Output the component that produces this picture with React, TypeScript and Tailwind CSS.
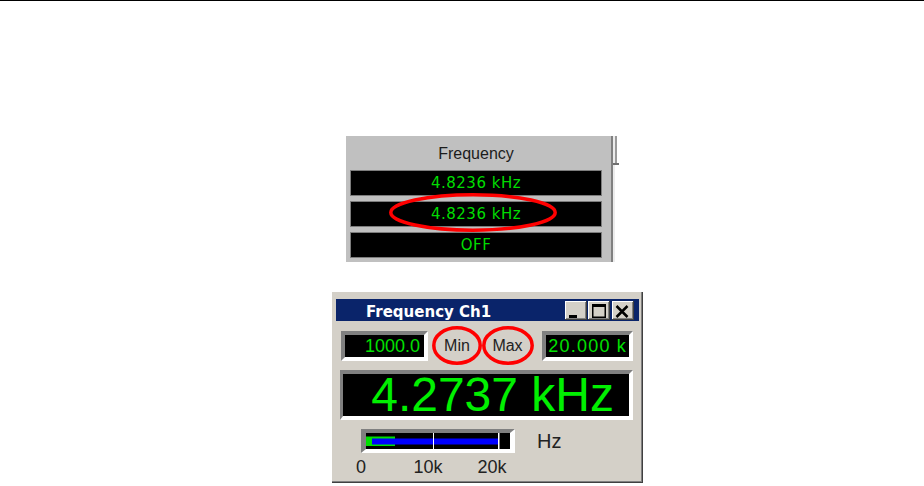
import React from "react";

function Row({ children }: { children: React.ReactNode }) {
  return (
    <div className="h-[26px] bg-black border border-[#7c7c7c] flex items-center justify-center text-[#00dc00] text-[15px] tracking-[0.5px] font-[family-name:'DejaVu_Sans',sans-serif]">
      {children}
    </div>
  );
}

function Btn({ children, className = "" }: { children: React.ReactNode; className?: string }) {
  return (
    <div
      className={
        "w-[22px] h-[19px] bg-[#d4d0c8] shadow-[inset_-1px_-1px_0_#404040,inset_1px_1px_0_#ffffff,inset_-2px_-2px_0_#808080] " +
        className
      }
    >
      {children}
    </div>
  );
}

export default function App() {
  return (
    <div className="w-[924px] h-[486px] bg-white overflow-hidden flex flex-col font-[family-name:'Liberation_Sans',Arial,sans-serif]">
      <div className="h-px w-full bg-black shrink-0" />

      {/* Top panel */}
      <div className="ml-[346px] mt-[135px] flex h-[126px] shrink-0">
        <div className="w-[265px] h-full bg-[#c0c0c0] pl-[4px] pr-[9px] flex flex-col">
          <div className="h-[34px] flex items-center justify-center text-[16px] text-[#1c1c1c] pt-[1px]">
            Frequency
          </div>
          <div className="flex flex-col gap-[5px]">
            <Row>4.8236 kHz</Row>
            <div className="relative">
              <Row>4.8236 kHz</Row>
              <svg
                className="absolute left-[39px] top-[-8px] pointer-events-none"
                width="168"
                height="39"
                viewBox="0 0 168 39"
              >
                <ellipse cx="84" cy="19.5" rx="82.2" ry="17.7" fill="none" stroke="#ff0000" strokeWidth="3.5" />
              </svg>
            </div>
            <Row>OFF</Row>
          </div>
        </div>
        <div className="w-[2px] h-full bg-[#808080]" />
        <div className="relative w-[2px] h-full bg-[#ececec]">
          <div className="absolute left-[2px] top-0 w-[2px] h-[28px] bg-[#9a9a9a]" />
          <div className="absolute left-0 top-[27px] w-[6px] h-[2px] bg-[#707070]" />
        </div>
      </div>

      {/* Window */}
      <div className="ml-[331px] mt-[29px] w-[312px] h-[192px] shrink-0 bg-[#d4d0c8] shadow-[inset_1px_1px_0_#ffffff,inset_-1px_-1px_0_#404040,inset_-2px_-2px_0_#808080] flex flex-col">
        {/* Title bar */}
        <div className="ml-[5px] mt-[8px] w-[303px] h-[22px] bg-[#0a246a] flex items-center">
          <span className="ml-[30px] pt-[4px] text-white text-[15px] font-bold leading-none font-[family-name:'DejaVu_Sans',sans-serif]">
            Frequency Ch1
          </span>
          <div className="ml-auto mr-[5px] flex items-center">
            <Btn>
              <svg width="22" height="19" viewBox="0 0 22 19">
                <rect x="4" y="14" width="8" height="3" fill="#000" />
              </svg>
            </Btn>
            <Btn className="ml-[1px]">
              <svg width="22" height="19" viewBox="0 0 22 19">
                <rect x="4.75" y="3.75" width="12.5" height="12.5" fill="none" stroke="#000" strokeWidth="1.5" />
                <rect x="4" y="3" width="14" height="3" fill="#000" />
              </svg>
            </Btn>
            <Btn className="ml-[2px]">
              <svg width="22" height="19" viewBox="0 0 22 19">
                <path d="M4.5 5 L15.5 16 M15.5 5 L4.5 16" stroke="#000" strokeWidth="2.5" fill="none" />
              </svg>
            </Btn>
          </div>
        </div>

        {/* Min / Max row */}
        <div className="ml-[10px] mt-[10px] h-[30px] flex">
          <div className="w-[87px] h-full border-4 border-t-[#808080] border-l-[#808080] border-b-white border-r-white bg-black flex items-center justify-end pr-[4px] text-[18px] leading-none text-[#00e000]">
            1000.0
          </div>
          <div className="relative ml-[4px] w-[50px] h-full flex items-center justify-center text-[16px] text-[#222]">
            Min
            <svg className="absolute left-0 top-[-5px] pointer-events-none" width="50" height="39" viewBox="0 0 50 39">
              <ellipse cx="25" cy="19.5" rx="23.2" ry="17.7" fill="none" stroke="#ff0000" strokeWidth="3.5" />
            </svg>
          </div>
          <div className="relative w-[51px] h-full flex items-center justify-center text-[16px] text-[#222]">
            Max
            <svg className="absolute left-0 top-[-5px] pointer-events-none" width="52" height="39" viewBox="0 0 52 39">
              <ellipse cx="26" cy="19.5" rx="24.2" ry="17.7" fill="none" stroke="#ff0000" strokeWidth="3.5" />
            </svg>
          </div>
          <div className="ml-[9px] w-[91px] h-full border-4 border-t-[#808080] border-l-[#808080] border-b-white border-r-white bg-black flex items-center justify-end pr-[2px] text-[18px] leading-none tracking-[1.2px] text-[#00e000]">
            20.000 k
          </div>
        </div>

        {/* Big display */}
        <div className="ml-[9px] mt-[9px] w-[293px] h-[50px] border-t-4 border-l-[3px] border-b-4 border-r-4 border-t-[#808080] border-l-[#808080] border-b-white border-r-white bg-black flex items-center justify-end pr-[15px] text-[48px] leading-none text-[#00f000]">
          4.2737 kHz
        </div>

        {/* Bar graph */}
        <div className="ml-[30px] mt-[9px] flex items-start">
          <div className="w-[154px] h-[24px] border-t-4 border-l-[5px] border-b-4 border-r-[5px] border-t-[#808080] border-l-[#808080] border-b-white border-r-white bg-black">
            <svg width="144" height="16" viewBox="0 0 144 16" className="block">
              <rect x="0" y="3.5" width="29" height="9.5" fill="#00e000" />
              <rect x="6" y="5.5" width="126" height="6" fill="#0000ff" />
              <rect x="67" y="0" width="1" height="16" fill="#ffffff" />
              <rect x="132" y="0" width="1.5" height="16" fill="#ffffff" />
            </svg>
          </div>
          <span className="ml-[22px] text-[20px] leading-[24px] text-[#222]">Hz</span>
        </div>

        {/* Scale labels */}
        <div className="mt-[4px] flex text-[18px] leading-[20px] text-[#222]">
          <span className="ml-[20px] w-[20px] text-center">0</span>
          <span className="ml-[37px] w-[40px] text-center">10k</span>
          <span className="ml-[24px] w-[40px] text-center">20k</span>
        </div>
      </div>
    </div>
  );
}
